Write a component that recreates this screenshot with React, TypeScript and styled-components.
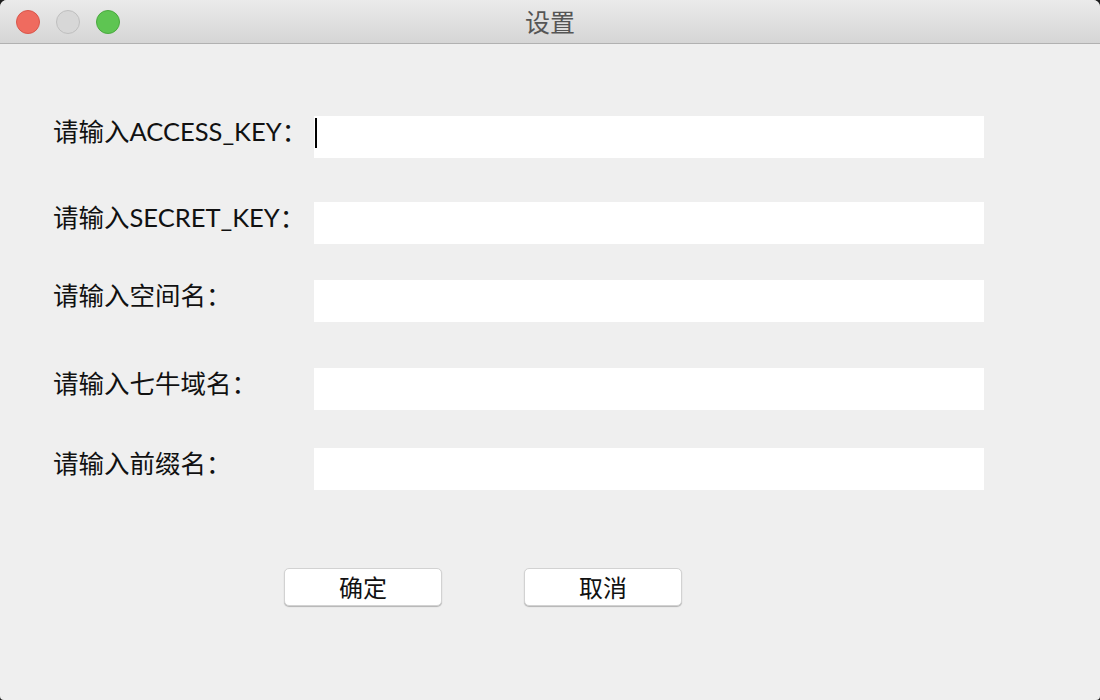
import React from "react";
import styled, { createGlobalStyle } from "styled-components";

const GlobalStyle = createGlobalStyle`
  html, body {
    margin: 0;
    padding: 0;
    background: #1f1f1f;
  }
  #root {
    width: 1100px;
    height: 700px;
  }
`;

const Window = styled.div`
  width: 1100px;
  height: 700px;
  display: flex;
  flex-direction: column;
  background: #efefef;
  border-radius: 7px 7px 4px 4px;
  overflow: hidden;
  font-family: "Lato", "Noto Sans CJK SC", sans-serif;
`;

const TitleBar = styled.div`
  height: 43px;
  flex: none;
  display: flex;
  align-items: center;
  justify-content: center;
  position: relative;
  background: linear-gradient(#ebebeb, #d5d5d5);
  border-bottom: 1px solid #b1b1b1;
`;

const Lights = styled.div`
  position: absolute;
  left: 16px;
  top: 10px;
  display: flex;
  gap: 16px;
`;

const Light = styled.span<{ $fill: string; $edge: string }>`
  width: 24px;
  height: 24px;
  border-radius: 50%;
  box-sizing: border-box;
  background: ${({ $fill }) => $fill};
  border: 1px solid ${({ $edge }) => $edge};
`;

const Title = styled.span`
  font-family: "Noto Sans CJK SC", sans-serif;
  font-size: 25px;
  line-height: 1;
  color: #555;
`;

const Form = styled.div`
  display: flex;
  flex-direction: column;
  padding: 72px 0 0 53px;
`;

const Row = styled.div<{ $gap: number }>`
  display: grid;
  grid-template-columns: 261px 670px;
  align-items: center;
  height: 42px;
  margin-top: ${({ $gap }) => $gap}px;
`;

const Label = styled.label`
  font-size: 25.5px;
  line-height: 1;
  color: #111;
  white-space: nowrap;
  padding-bottom: 10px;
`;

const Field = styled.div`
  position: relative;
  height: 42px;
`;

const Input = styled.input`
  width: 100%;
  height: 42px;
  box-sizing: border-box;
  border: none;
  outline: none;
  background: #fff;
  padding: 0 4px;
  font-size: 20px;
`;

const Caret = styled.span`
  position: absolute;
  left: 1px;
  top: 2px;
  width: 2px;
  height: 30px;
  background: #000;
`;

const Buttons = styled.div`
  display: flex;
  gap: 82px;
  margin: 78px 0 0 231px;
`;

const Button = styled.button`
  width: 158px;
  height: 38px;
  box-sizing: border-box;
  background: #fff;
  border: 1px solid #d2d2d2;
  border-radius: 5px;
  box-shadow: 0 1px 1px rgba(0, 0, 0, 0.25);
  font-family: "Noto Sans CJK SC", sans-serif;
  font-size: 24px;
  line-height: 1;
  color: #111;
  padding: 0;
`;

const fields = [
  { label: "请输入ACCESS_KEY：", gap: 0, caret: true },
  { label: "请输入SECRET_KEY：", gap: 44 },
  { label: "请输入空间名：", gap: 36 },
  { label: "请输入七牛域名：", gap: 46 },
  { label: "请输入前缀名：", gap: 38 },
];

export default function App() {
  return (
    <>
      <GlobalStyle />
      <Window>
        <TitleBar>
          <Lights>
            <Light $fill="#ef6b5f" $edge="#d9564b" />
            <Light $fill="#d7d7d7" $edge="#bfbfbf" />
            <Light $fill="#5ec552" $edge="#4aa93f" />
          </Lights>
          <Title>设置</Title>
        </TitleBar>
        <Form>
          {fields.map((f) => (
            <Row key={f.label} $gap={f.gap}>
              <Label>{f.label}</Label>
              <Field>
                <Input />
                {f.caret && <Caret />}
              </Field>
            </Row>
          ))}
          <Buttons>
            <Button>确定</Button>
            <Button>取消</Button>
          </Buttons>
        </Form>
      </Window>
    </>
  );
}
